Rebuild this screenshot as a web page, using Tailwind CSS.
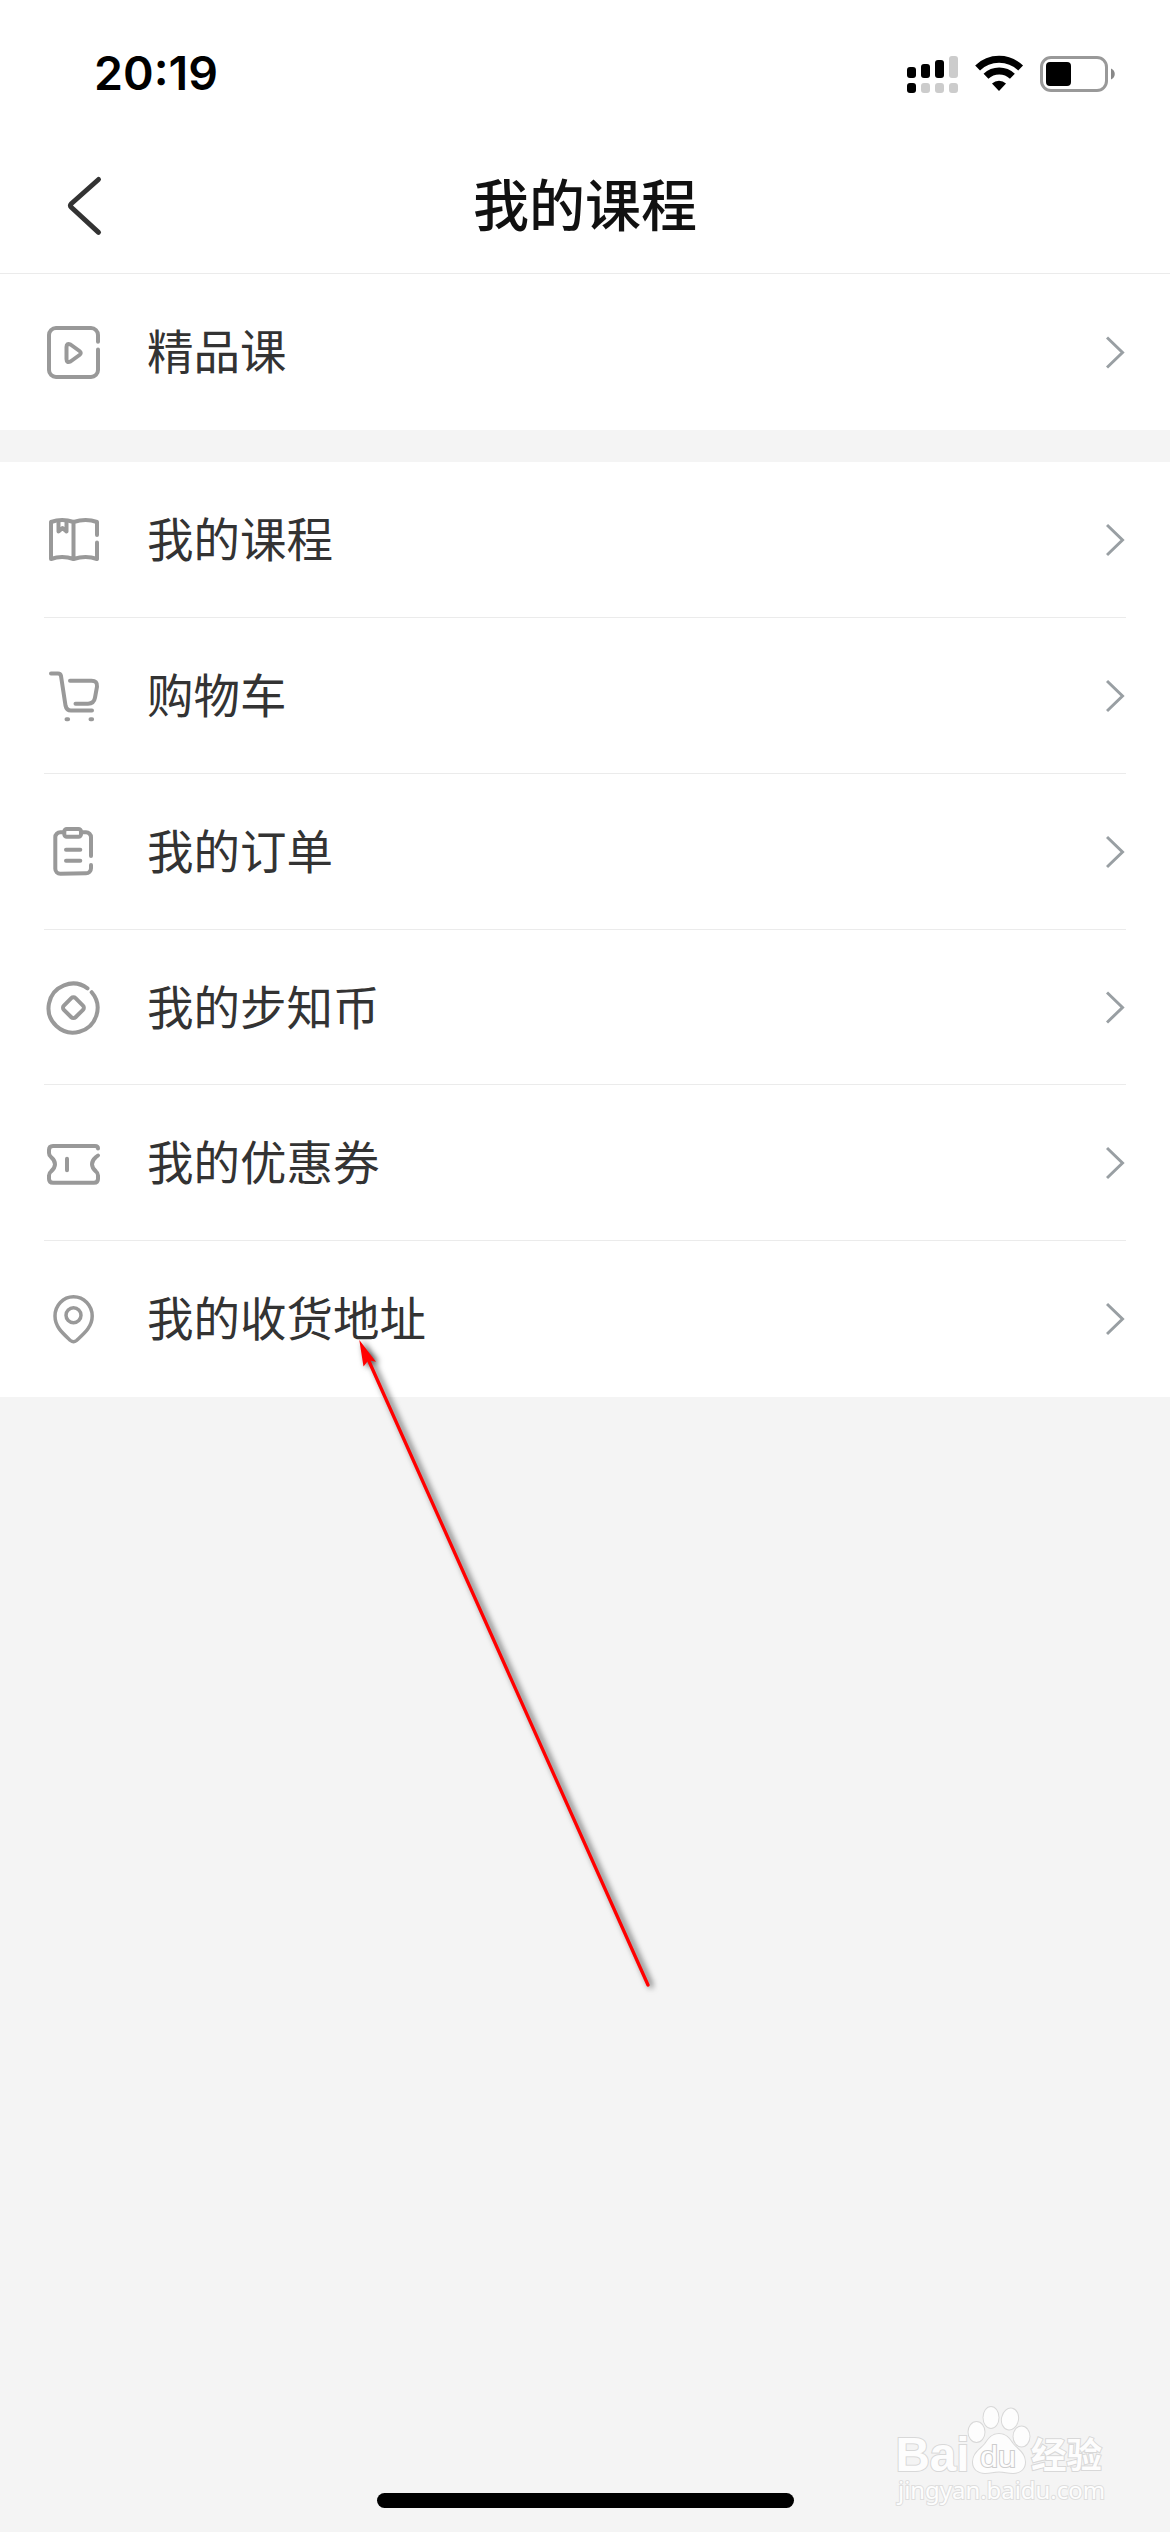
<!DOCTYPE html>
<html lang="zh-CN">
<head>
    <meta charset="UTF-8">
    <meta name="viewport" content="width=device-width, initial-scale=1.0">
    <title>我的课程</title>
    <script src="https://cdn.jsdelivr.net/npm/@tailwindcss/browser@4"></script>
</head>
<body class="relative h-[2532px] w-[1170px] overflow-hidden bg-[#f4f4f4] font-['Noto_Sans_CJK_SC',sans-serif] text-[46.5px] text-[#333]">
    <header class="flex h-[274px] flex-col border-b border-[#ebebeb] bg-white">
        <div class="flex h-[148px] items-center justify-between pr-[54px] pl-[94px]">
            <span class="pb-[1px] font-['Inter',sans-serif] text-[46.5px] leading-none font-semibold text-black">20:19</span>
            <!-- signal, wifi, battery -->
            <svg class="h-[40px] w-[210px]" viewBox="906 54 210 40">
                <g fill="#000">
                    <rect x="907" y="67" width="9" height="11" rx="3"/>
                    <rect x="921" y="64" width="9" height="14" rx="3"/>
                    <rect x="935" y="60" width="9" height="18" rx="3"/>
                    <rect x="907" y="83" width="9" height="10" rx="3"/>
                </g>
                <g fill="#ccc">
                    <rect x="949" y="56" width="9" height="22" rx="3"/>
                    <rect x="921" y="83" width="9" height="10" rx="3"/>
                    <rect x="935" y="83" width="9" height="10" rx="3"/>
                    <rect x="949" y="83" width="9" height="10" rx="3"/>
                </g>
                <path d="M977.6 68a31 31 0 0 1 43 0M986 76.3a19 19 0 0 1 26.400 0" fill="none" stroke="#000" stroke-width="7"/>
                <path d="M992 83.500a10.500 10.500 0 0 1 14 0L999 91z"/>
                <rect x="1041.500" y="57.500" width="65" height="33" rx="9.500" fill="none" stroke="#999" stroke-width="3"/>
                <rect x="1046" y="62" width="25" height="24" rx="4"/>
                <path d="M1111 68.500c5 2 5 9 0 11z" fill="#888"/>
            </svg>
        </div>
        <div class="grid h-[125px] grid-cols-[170px_1fr_170px] items-center pb-[10px]">
            <svg class="ml-[64px] h-[64px] w-[40px]" viewBox="64 174 40 64" fill="none" stroke="#333" stroke-width="5" stroke-linecap="round" stroke-linejoin="round">
                <path d="M98.500 179.500L71.500 203.500q-2 2 0 4L98.500 232.300"/>
            </svg>
            <h1 class="pb-2 text-center text-[56px] leading-[80px] font-medium text-[#111]">我的课程</h1>
        </div>
    </header>

    <main>
        <section class="bg-white px-[44px]">
            <div class="flex h-[156px] items-start pt-12">
                <svg class="h-[60px] w-[60px]" viewBox="0 0 60 60" fill="none" stroke="#999" stroke-width="4" stroke-linecap="round" stroke-linejoin="round">
                    <path d="M54 19.700V13a7 7 0 0 0-7-7H12a7 7 0 0 0-7 7v35a7 7 0 0 0 7 7h35a7 7 0 0 0 7-7V27.500"/>
                    <path d="M22.500 25v12q0 4.500 4 2.500l9-6.500q2.500-2 0-4l-9-6.500q-4-2-4 2.500z"/>
                </svg>
                <span class="ml-[43px] flex-1 leading-[54px]">精品课</span>
                <svg class="h-[60px] w-[20px]" viewBox="0 0 20 60" fill="none" stroke="#999fa3" stroke-width="3"><path d="M1 15.500l15.500 15L1 45.500"/></svg>
            </div>
        </section>

        <section class="mt-8 bg-white px-[44px]">
            <div class="flex h-[156px] items-start border-b border-[#ebebeb] pt-12">
                <svg class="h-[60px] w-[60px]" viewBox="0 0 60 60" fill="none" stroke="#999" stroke-width="4" stroke-linecap="round" stroke-linejoin="round">
                    <path d="M53 25V12q-11-4-23.500 0Q18 8 7 12v37q11-4 22.500 0 12.500-4 23.500 0V32.500M29.500 12v37"/>
                    <path d="M14.500 11v10.500l4-3.500 4 3.500V11"/>
                </svg>
                <span class="ml-[43px] flex-1 leading-[54px]">我的课程</span>
                <svg class="h-[60px] w-[20px]" viewBox="0 0 20 60" fill="none" stroke="#999fa3" stroke-width="3"><path d="M1 15l15.500 15L1 45"/></svg>
            </div>
            <div class="flex h-[156px] items-start border-b border-[#ebebeb] pt-12">
                <svg class="h-[60px] w-[60px]" viewBox="0 0 60 60" fill="none" stroke="#999" stroke-width="4" stroke-linecap="round" stroke-linejoin="round">
                    <path d="M7 7.500h7q2.500 0 3 2.500l4.500 29.500q1 5 5.500 5h21"/>
                    <path d="M26 14.700h21.500q6 0 5.500 6l-2 11q-1 6-7 6H31.500"/>
                    <path d="M22.500 53.300h1.600M46.500 53.300h1.600"/>
                </svg>
                <span class="ml-[43px] flex-1 leading-[54px]">购物车</span>
                <svg class="h-[60px] w-[20px]" viewBox="0 0 20 60" fill="none" stroke="#999fa3" stroke-width="3"><path d="M1 15l15.500 15L1 45"/></svg>
            </div>
            <div class="flex h-[156px] items-start border-b border-[#ebebeb] pt-12">
                <svg class="h-[60px] w-[60px]" viewBox="0 0 60 60" fill="none" stroke="#999" stroke-width="4" stroke-linecap="round" stroke-linejoin="round">
                    <rect x="20.300" y="7" width="16.700" height="7.700" rx="2.500"/>
                    <path d="M19 10.300h-2.700a5 5 0 0 0-5 5v31.500a5 5 0 0 0 5 5L42 51.300a5 5 0 0 0 5-5V43M47 34V15.300a5 5 0 0 0-5-5h-3.500M22 27.700h14.300M22 38.700h14.300"/>
                </svg>
                <span class="ml-[43px] flex-1 leading-[54px]">我的订单</span>
                <svg class="h-[60px] w-[20px]" viewBox="0 0 20 60" fill="none" stroke="#999fa3" stroke-width="3"><path d="M1 15l15.500 15L1 45"/></svg>
            </div>
            <div class="flex h-[155px] items-start border-b border-[#ebebeb] pt-12">
                <svg class="h-[60px] w-[60px]" viewBox="0 0 60 60" fill="none" stroke="#999" stroke-width="4" stroke-linecap="round" stroke-linejoin="round">
                    <path d="M43.500 10.300a24.500 24.500 0 1 0 4.200 3.900"/>
                    <rect x="21.200" y="21.500" width="16.500" height="16.500" rx="3" transform="rotate(45 29.500 29.700)"/>
                </svg>
                <span class="ml-[43px] flex-1 leading-[54px]">我的步知币</span>
                <svg class="h-[60px] w-[20px]" viewBox="0 0 20 60" fill="none" stroke="#999fa3" stroke-width="3"><path d="M1 14.500l15.500 15L1 44.500"/></svg>
            </div>
            <div class="flex h-[156px] items-start border-b border-[#ebebeb] pt-12">
                <svg class="h-[60px] w-[60px]" viewBox="0 0 60 60" fill="none" stroke="#999" stroke-width="4" stroke-linecap="round" stroke-linejoin="round">
                    <path d="M54 15.500q0-2.500-3-2.500H9q-4 0-4 4v3q0 2.500 2 4 8 7 0 14.500-2 1.500-2 4v3.200q0 4 4 4h41q4 0 4-4V42.500q0-2.500-2-4-8-7.500 0-14.500l2-1.500M23 25.700v11.600"/>
                </svg>
                <span class="ml-[43px] flex-1 leading-[54px]">我的优惠券</span>
                <svg class="h-[60px] w-[20px]" viewBox="0 0 20 60" fill="none" stroke="#999fa3" stroke-width="3"><path d="M1 15l15.500 15L1 45"/></svg>
            </div>
            <div class="flex h-[156px] items-start pt-12">
                <svg class="h-[60px] w-[60px]" viewBox="0 0 60 60" fill="none" stroke="#999" stroke-width="3.500" stroke-linecap="round" stroke-linejoin="round">
                    <path d="M29.500 7.800C19 7.800 11 16.500 11 27c0 11 8 17.500 15.500 24.500q3 2.500 6 0C40 44.500 48.200 38 48.200 27c0-10.500-8.200-19.200-18.700-19.200z"/>
                    <circle cx="29.500" cy="26.300" r="7.500"/>
                </svg>
                <span class="ml-[43px] flex-1 leading-[54px]">我的收货地址</span>
                <svg class="h-[60px] w-[20px]" viewBox="0 0 20 60" fill="none" stroke="#999fa3" stroke-width="3"><path d="M1 15l15.500 15L1 45"/></svg>
            </div>
        </section>
    </main>

    <!-- pointer to the address row -->
    <svg class="absolute top-[1330px] left-[340px] h-[680px] w-[330px] drop-shadow-[3px_1px_3px_rgba(0,0,0,0.75)]" viewBox="340 1330 330 680">
        <path d="M368 1359L648 1985" stroke="#f00" stroke-width="3.300" stroke-linecap="round"/>
        <path d="M359.300 1340l16.700 21.700-7.500-1.500-5 6.300z" fill="#f00"/>
    </svg>

    <!-- watermark -->
    <svg class="absolute top-[2380px] left-[860px] h-[152px] w-[300px]" viewBox="0 0 300 152" fill="#fdfdfd" stroke="#d8d8d8" stroke-width="2" paint-order="stroke">
        <text x="35.500" y="91" font-family="Liberation Sans" font-weight="700" font-size="48" textLength="74" lengthAdjust="spacingAndGlyphs">Bai</text>
        <ellipse cx="116.500" cy="52" rx="8" ry="10"/>
        <ellipse cx="131" cy="37.500" rx="7.500" ry="10.500"/>
        <ellipse cx="150" cy="39" rx="8" ry="10.500" transform="rotate(12 150 39)"/>
        <ellipse cx="161.500" cy="56.500" rx="8" ry="10"/>
        <path d="M139 54c8 0 11 6 14 10 4 5 12 9 12 18 0 7-5 11-12 11-5 0-9-1.500-14-1.500S130 93 125 93c-7 0-12-4-12-11 0-9 8-13 12-18 3-4 6-10 14-10z"/>
        <text x="120" y="87" font-family="Liberation Sans" font-size="30" stroke="#cdcdcd" textLength="36" lengthAdjust="spacingAndGlyphs">du</text>
        <text x="171" y="88" font-family="Noto Sans CJK SC" font-weight="700" font-size="35.500">经验</text>
        <text x="38" y="119" font-family="Noto Sans" font-size="24" stroke="#dedede" textLength="207" lengthAdjust="spacingAndGlyphs">jingyan.baidu.com</text>
    </svg>

    <!-- home indicator -->
    <div class="absolute bottom-6 left-[377px] h-[15px] w-[417px] rounded-full bg-black"></div>
</body>
</html>
